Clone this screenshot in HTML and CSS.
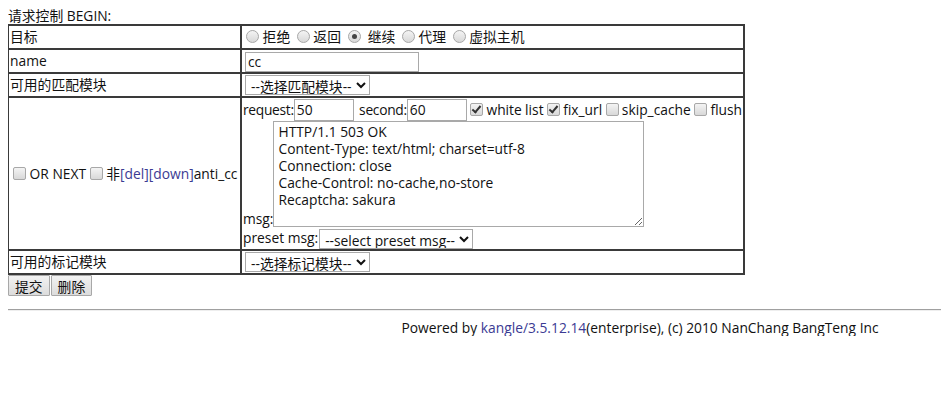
FILE: index.html
```html
<!DOCTYPE html>
<html>
<head>
    <meta charset="utf-8">
    <link rel="stylesheet" href="styles.css">
</head>
<body>
    <form class="rule-form">
        <div class="title">请求控制 BEGIN:</div>
        <table class="rule-table">
            <colgroup>
                <col class="col-label">
                <col>
            </colgroup>
            <tr>
                <td>目标</td>
                <td>
                    <input type="radio" name="jump"> 拒绝
                    <input type="radio" name="jump"> 返回
                    <input type="radio" name="jump" checked> &nbsp;继续
                    <input type="radio" name="jump"> 代理
                    <input type="radio" name="jump"> 虚拟主机
                </td>
            </tr>
            <tr>
                <td>name</td>
                <td><input type="text" class="name-input" value="cc"></td>
            </tr>
            <tr>
                <td>可用的匹配模块</td>
                <td>
                    <select class="pick">
                        <option>--选择匹配模块--</option>
                    </select>
                </td>
            </tr>
            <tr>
                <td class="middle">
                    <input type="checkbox"> OR NEXT <input type="checkbox"> 非<a href="#">[del]</a><a href="#">[down]</a>anti_cc
                </td>
                <td class="cc-cell">
                    <div class="cc-line">
                        <span class="tight">request:</span><input type="text" class="num" value="50">
                        <span class="tight second">second:</span><input type="text" class="num" value="60">
                        <input type="checkbox" checked> white list
                        <input type="checkbox" checked> fix_url
                        <input type="checkbox"> skip_cache
                        <input type="checkbox"> flush
                    </div>
                    <div class="msg-line">msg:<textarea class="msg" spellcheck="false">HTTP/1.1 503 OK
Content-Type: text/html; charset=utf-8
Connection: close
Cache-Control: no-cache,no-store
Recaptcha: sakura
</textarea></div>
                    <div class="preset-line">preset msg:<select class="pick">
                        <option>--select preset msg--</option>
                    </select></div>
                </td>
            </tr>
            <tr>
                <td>可用的标记模块</td>
                <td>
                    <select class="pick">
                        <option>--选择标记模块--</option>
                    </select>
                </td>
            </tr>
        </table>
        <div class="actions">
            <button type="button" class="btn">提交</button><button type="button" class="btn">删除</button>
        </div>
    </form>

    <div class="page-foot">
        <hr>
        <div class="footer">Powered by <a href="#">kangle/3.5.12.14</a>(enterprise), (c) 2010 NanChang BangTeng Inc</div>
    </div>
</body>
</html>
```

FILE: styles.css
```css
html {
    overflow: hidden;
}

body {
    margin: 8px;
    font-family: "Open Sans", "Noto Sans CJK SC", sans-serif;
    font-size: 13.8px;
    color: #111;
    background: #fff;
}

a {
    color: #3b3b93;
    text-decoration: none;
}

.title {
    line-height: 16px;
    height: 16px;
}

.rule-table {
    width: 738px;
    margin-left: -1px;
    table-layout: fixed;
    border-collapse: collapse;
    border: 2px solid #3a3a3a;
}

.col-label {
    width: 233px;
}

.rule-table td {
    border: 2px solid #3a3a3a;
    padding: 0 1px;
    height: 22px;
    line-height: 18px;
    white-space: nowrap;
}

.rule-table td.middle {
    vertical-align: middle;
    overflow: hidden;
    padding-left: 4px;
}

input[type="radio"],
input[type="checkbox"] {
    appearance: none;
    -webkit-appearance: none;
    box-sizing: border-box;
    width: 13px;
    height: 13px;
    margin: 0;
    border: 1px solid #a8a8a8;
    background: linear-gradient(#f4f4f4, #d8d8d8);
    vertical-align: -1px;
    position: relative;
}

input[type="radio"] {
    border-radius: 50%;
    margin-left: 3px;
}

input[type="checkbox"] {
    border-radius: 2px;
}

input[type="radio"]:checked::after {
    content: "";
    position: absolute;
    left: 3px;
    top: 3px;
    width: 5px;
    height: 5px;
    border-radius: 50%;
    background: #444;
}

input[type="checkbox"]:checked::after {
    content: "";
    position: absolute;
    left: 3px;
    top: 0;
    width: 3px;
    height: 7px;
    border: solid #333;
    border-width: 0 2px 2px 0;
    transform: rotate(40deg);
}

input[type="text"] {
    font: inherit;
    color: #111;
    border: 1px solid #a9a9a9;
    padding: 0 2px;
    height: 20px;
    box-sizing: border-box;
}

.name-input {
    width: 174px;
    margin: 1px 0 0 2px;
}

.num {
    width: 60px;
    height: 22px !important;
    margin: 0;
}

.tight {
    letter-spacing: -0.3px;
}

.second {
    margin-left: 2px;
}

select.pick {
    font: inherit;
    color: #111;
    height: 20px;
    border: 1px solid #a9a9a9;
    background: #fff;
    padding: 0 1px;
    margin: 0 0 0 2px;
    vertical-align: middle;
}

.cc-cell {
    vertical-align: top;
    padding-top: 1px !important;
}

.cc-line {
    height: 22px;
    line-height: 22px;
    word-spacing: -0.25px;
}

.msg-line {
    height: 106px;
    line-height: 16px;
}

.msg {
    font: inherit;
    line-height: 17px;
    color: #111;
    width: 371px;
    height: 106px;
    box-sizing: border-box;
    border: 1px solid #a9a9a9;
    padding: 1px 4px;
    resize: both;
    overflow-y: scroll;
    vertical-align: bottom;
    margin: 0;
}

.preset-line {
    height: 22px;
    line-height: 22px;
}

.preset-line select.pick {
    margin-left: 1px;
}

.actions {
    margin-top: 0;
    height: 21px;
}

.btn {
    font: inherit;
    color: #111;
    height: 21px;
    padding: 0 6px;
    border: 1px solid #a8a8a8;
    border-radius: 1px;
    background: linear-gradient(#f2f2f2, #dcdcdc);
    margin: 0 1px 0 0;
}

.page-foot {
    width: 1264px;
}

.page-foot hr {
    margin: 13px 0 0 -1px;
    border: 0;
    border-top: 1px solid #a0a0a0;
    border-bottom: 1px solid #eee;
}

.footer {
    text-align: center;
    margin-top: 9px;
    line-height: 16px;
}
```
